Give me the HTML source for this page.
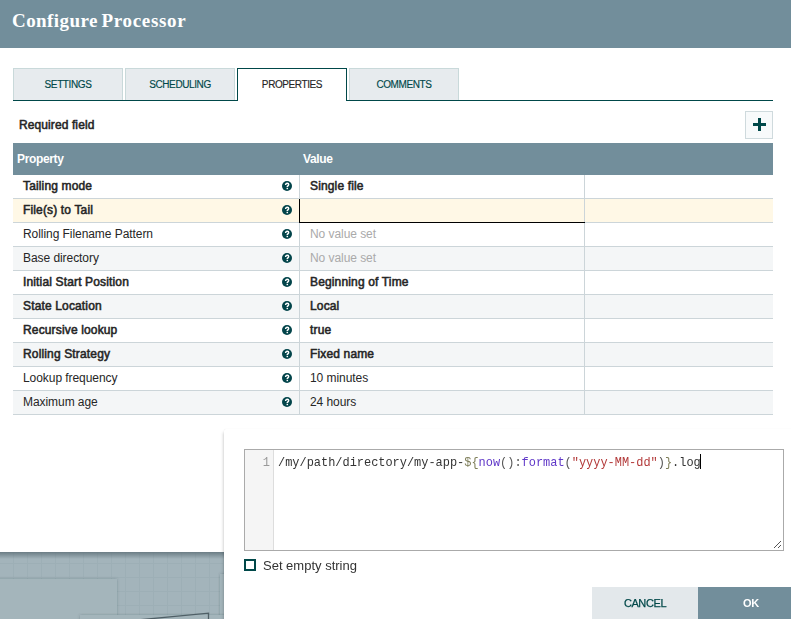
<!DOCTYPE html>
<html><head><meta charset="utf-8">
<style>
*{box-sizing:border-box;margin:0;padding:0}
html,body{width:791px;height:619px;overflow:hidden;background:#fff;font-family:"Liberation Sans",sans-serif;color:#262626;position:relative}
.abs{position:absolute}
#hdr{left:0;top:0;width:791px;height:48px;background:#728e9b}
#title{left:12px;top:10px;font-family:"Liberation Serif",serif;font-weight:bold;font-size:19px;letter-spacing:0.42px;word-spacing:-1.5px;color:#fff;white-space:nowrap}
.tab{top:68px;width:110px;height:32px;background:#e7ebee;border:1px solid #c9d9da;border-bottom:none;font-size:10px;letter-spacing:-0.4px;color:#004849;text-align:center;line-height:31px;-webkit-text-stroke:0.15px currentColor}
.tab.sel{background:#fff;color:#262626;border:1px solid #004849;border-bottom:none;height:33px;z-index:2}
#tabline{left:13px;top:100px;width:760px;height:1px;background:#004849}
#req{left:19px;top:118px;font-size:12px;-webkit-text-stroke:0.55px currentColor;letter-spacing:0.1px;white-space:nowrap}
#add{left:745px;top:111px;width:28px;height:28px;background:#f8fafb;border:1px solid #cfdadd}
#add:before{content:"";position:absolute;left:7px;top:11px;width:13px;height:3px;background:#004849}
#add:after{content:"";position:absolute;left:12px;top:6px;width:3px;height:13px;background:#004849}
#th{left:13px;top:143px;width:760px;height:32px;background:#728e9b;color:#fff;font-weight:bold;font-size:12px;letter-spacing:-0.35px}
#th span{position:absolute;top:9px}
.row{left:13px;width:760px;height:24px;border-bottom:1px solid #ccd5d9;font-size:12px;letter-spacing:-0.06px}
.row.alt{background:#f4f6f7}
.row.hl{background:#fff8e6}
.c1{position:absolute;left:10px;top:4px;white-space:nowrap}
.c2{position:absolute;left:297px;top:4px;white-space:nowrap}
.b{-webkit-text-stroke:0.55px currentColor;letter-spacing:0.15px}
.nv{color:#aaa}
.v1{position:absolute;left:286px;top:0;width:1px;height:23px;background:#ccd5d9}
.v2{position:absolute;left:571px;top:0;width:1px;height:23px;background:#ccd5d9}
.help{position:absolute;left:269px;top:6px;width:10px;height:10px}
#canvas{left:0;top:552px;width:224px;height:67px}
#popup{left:224px;top:429px;width:567px;height:190px;background:#fff;border-radius:2px 0 0 0;box-shadow:0 0 1px rgba(0,0,0,.1),-1px 3px 3px rgba(0,0,0,.16)}
#ed{will-change:transform;left:244px;top:449px;width:540px;height:102px;border:1px solid #aaa;background:#fff}
#gut{left:0;top:0;width:29px;height:100px;background:#f5f5f5;border-right:1px solid #ddd}
#ln{left:0;top:6px;width:25px;text-align:right;font-family:"Liberation Mono",monospace;font-size:12px;color:#999}
#code{left:33px;top:6px;font-family:"Liberation Mono",monospace;font-size:11.95px;color:#333;white-space:pre}
#chk{left:244px;top:559px;width:12px;height:12px;border:2px solid #004849}
#chkl{left:263px;top:558px;font-size:13px;color:#333;white-space:nowrap;will-change:transform}
#cancel{will-change:transform;left:592px;top:587px;width:106px;height:32px;background:#e3e8eb;color:#004849;font-size:11px;letter-spacing:-0.4px;-webkit-text-stroke:0.25px currentColor;text-align:center;line-height:32px}
#ok{will-change:transform;left:698px;top:587px;width:106px;height:32px;background:#728e9b;color:#fff;font-size:11px;font-weight:bold;letter-spacing:-0.3px;text-align:center;line-height:32px}
</style></head><body>
<div id="hdr" class="abs"></div>
<div id="title" class="abs">Configure <span style="letter-spacing:0.68px">Processor</span></div>

<div class="tab abs" style="left:13px">SETTINGS</div>
<div class="tab abs" style="left:125px">SCHEDULING</div>
<div class="tab abs sel" style="left:237px">PROPERTIES</div>
<div class="tab abs" style="left:349px">COMMENTS</div>
<div id="tabline" class="abs"></div>

<div id="req" class="abs">Required field</div>
<div id="add" class="abs"></div>

<div id="th" class="abs"><span style="left:4px">Property</span><span style="left:290px">Value</span></div>

<div class="row abs" style="top:175px"><span class="c1 b">Tailing mode</span><svg class="help" width="10" height="10" viewBox="0 0 10 10"><circle cx="5" cy="5" r="5" fill="#02444a"/><path d="M3.6 3.9C3.6 2.8 4.3 2.3 5.2 2.3C6.1 2.3 6.7 2.9 6.7 3.6C6.7 4.5 5.7 4.8 5.3 5.4L5.3 6.1" fill="none" stroke="#fff" stroke-width="1.45"/><rect x="4.55" y="6.8" width="1.5" height="1.4" fill="#fff"/></svg><span class="v1"></span><span class="c2 b">Single file</span><span class="v2"></span></div>
<div class="row abs hl" style="top:199px"><span class="c1 b">File(s) to Tail</span><span style="position:absolute;left:286px;top:0;width:1px;height:24px;background:#000;z-index:3"></span><span style="position:absolute;left:286px;top:23px;width:286px;height:1px;background:#000;z-index:3"></span><svg class="help" width="10" height="10" viewBox="0 0 10 10"><circle cx="5" cy="5" r="5" fill="#02444a"/><path d="M3.6 3.9C3.6 2.8 4.3 2.3 5.2 2.3C6.1 2.3 6.7 2.9 6.7 3.6C6.7 4.5 5.7 4.8 5.3 5.4L5.3 6.1" fill="none" stroke="#fff" stroke-width="1.45"/><rect x="4.55" y="6.8" width="1.5" height="1.4" fill="#fff"/></svg><span class="v1"></span><span class="v2"></span></div>
<div class="row abs" style="top:223px"><span class="c1">Rolling Filename Pattern</span><svg class="help" width="10" height="10" viewBox="0 0 10 10"><circle cx="5" cy="5" r="5" fill="#02444a"/><path d="M3.6 3.9C3.6 2.8 4.3 2.3 5.2 2.3C6.1 2.3 6.7 2.9 6.7 3.6C6.7 4.5 5.7 4.8 5.3 5.4L5.3 6.1" fill="none" stroke="#fff" stroke-width="1.45"/><rect x="4.55" y="6.8" width="1.5" height="1.4" fill="#fff"/></svg><span class="v1"></span><span class="c2 nv">No value set</span><span class="v2"></span></div>
<div class="row abs alt" style="top:247px"><span class="c1">Base directory</span><svg class="help" width="10" height="10" viewBox="0 0 10 10"><circle cx="5" cy="5" r="5" fill="#02444a"/><path d="M3.6 3.9C3.6 2.8 4.3 2.3 5.2 2.3C6.1 2.3 6.7 2.9 6.7 3.6C6.7 4.5 5.7 4.8 5.3 5.4L5.3 6.1" fill="none" stroke="#fff" stroke-width="1.45"/><rect x="4.55" y="6.8" width="1.5" height="1.4" fill="#fff"/></svg><span class="v1"></span><span class="c2 nv">No value set</span><span class="v2"></span></div>
<div class="row abs" style="top:271px"><span class="c1 b">Initial Start Position</span><svg class="help" width="10" height="10" viewBox="0 0 10 10"><circle cx="5" cy="5" r="5" fill="#02444a"/><path d="M3.6 3.9C3.6 2.8 4.3 2.3 5.2 2.3C6.1 2.3 6.7 2.9 6.7 3.6C6.7 4.5 5.7 4.8 5.3 5.4L5.3 6.1" fill="none" stroke="#fff" stroke-width="1.45"/><rect x="4.55" y="6.8" width="1.5" height="1.4" fill="#fff"/></svg><span class="v1"></span><span class="c2 b">Beginning of Time</span><span class="v2"></span></div>
<div class="row abs alt" style="top:295px"><span class="c1 b">State Location</span><svg class="help" width="10" height="10" viewBox="0 0 10 10"><circle cx="5" cy="5" r="5" fill="#02444a"/><path d="M3.6 3.9C3.6 2.8 4.3 2.3 5.2 2.3C6.1 2.3 6.7 2.9 6.7 3.6C6.7 4.5 5.7 4.8 5.3 5.4L5.3 6.1" fill="none" stroke="#fff" stroke-width="1.45"/><rect x="4.55" y="6.8" width="1.5" height="1.4" fill="#fff"/></svg><span class="v1"></span><span class="c2 b">Local</span><span class="v2"></span></div>
<div class="row abs" style="top:319px"><span class="c1 b">Recursive lookup</span><svg class="help" width="10" height="10" viewBox="0 0 10 10"><circle cx="5" cy="5" r="5" fill="#02444a"/><path d="M3.6 3.9C3.6 2.8 4.3 2.3 5.2 2.3C6.1 2.3 6.7 2.9 6.7 3.6C6.7 4.5 5.7 4.8 5.3 5.4L5.3 6.1" fill="none" stroke="#fff" stroke-width="1.45"/><rect x="4.55" y="6.8" width="1.5" height="1.4" fill="#fff"/></svg><span class="v1"></span><span class="c2 b">true</span><span class="v2"></span></div>
<div class="row abs alt" style="top:343px"><span class="c1 b">Rolling Strategy</span><svg class="help" width="10" height="10" viewBox="0 0 10 10"><circle cx="5" cy="5" r="5" fill="#02444a"/><path d="M3.6 3.9C3.6 2.8 4.3 2.3 5.2 2.3C6.1 2.3 6.7 2.9 6.7 3.6C6.7 4.5 5.7 4.8 5.3 5.4L5.3 6.1" fill="none" stroke="#fff" stroke-width="1.45"/><rect x="4.55" y="6.8" width="1.5" height="1.4" fill="#fff"/></svg><span class="v1"></span><span class="c2 b">Fixed name</span><span class="v2"></span></div>
<div class="row abs" style="top:367px"><span class="c1">Lookup frequency</span><svg class="help" width="10" height="10" viewBox="0 0 10 10"><circle cx="5" cy="5" r="5" fill="#02444a"/><path d="M3.6 3.9C3.6 2.8 4.3 2.3 5.2 2.3C6.1 2.3 6.7 2.9 6.7 3.6C6.7 4.5 5.7 4.8 5.3 5.4L5.3 6.1" fill="none" stroke="#fff" stroke-width="1.45"/><rect x="4.55" y="6.8" width="1.5" height="1.4" fill="#fff"/></svg><span class="v1"></span><span class="c2">10 minutes</span><span class="v2"></span></div>
<div class="row abs alt" style="top:391px"><span class="c1">Maximum age</span><svg class="help" width="10" height="10" viewBox="0 0 10 10"><circle cx="5" cy="5" r="5" fill="#02444a"/><path d="M3.6 3.9C3.6 2.8 4.3 2.3 5.2 2.3C6.1 2.3 6.7 2.9 6.7 3.6C6.7 4.5 5.7 4.8 5.3 5.4L5.3 6.1" fill="none" stroke="#fff" stroke-width="1.45"/><rect x="4.55" y="6.8" width="1.5" height="1.4" fill="#fff"/></svg><span class="v1"></span><span class="c2">24 hours</span><span class="v2"></span></div>

<svg id="canvas" class="abs" width="224" height="67" viewBox="0 0 224 67"><rect width="224" height="67" fill="#a3b4bb"/><g stroke="#9dafb6" stroke-width="1"><line x1="13.5" y1="0" x2="13.5" y2="67" /><line x1="27.5" y1="0" x2="27.5" y2="67" /><line x1="41.5" y1="0" x2="41.5" y2="67" /><line x1="55.5" y1="0" x2="55.5" y2="67" /><line x1="69.5" y1="0" x2="69.5" y2="67" /><line x1="83.5" y1="0" x2="83.5" y2="67" /><line x1="97.5" y1="0" x2="97.5" y2="67" /><line x1="111.5" y1="0" x2="111.5" y2="67" /><line x1="125.5" y1="0" x2="125.5" y2="67" /><line x1="139.5" y1="0" x2="139.5" y2="67" /><line x1="153.5" y1="0" x2="153.5" y2="67" /><line x1="167.5" y1="0" x2="167.5" y2="67" /><line x1="181.5" y1="0" x2="181.5" y2="67" /><line x1="195.5" y1="0" x2="195.5" y2="67" /><line x1="209.5" y1="0" x2="209.5" y2="67" /><line x1="223.5" y1="0" x2="223.5" y2="67" /><line x1="237.5" y1="0" x2="237.5" y2="67" /><line x1="0" y1="11.5" x2="224" y2="11.5" /><line x1="0" y1="25.5" x2="224" y2="25.5" /><line x1="0" y1="39.5" x2="224" y2="39.5" /><line x1="0" y1="53.5" x2="224" y2="53.5" /><line x1="0" y1="67.5" x2="224" y2="67.5" /></g><defs><filter id="ds" x="-20%" y="-20%" width="140%" height="140%"><feDropShadow dx="0" dy="0" stdDeviation="1.5" flood-color="#3c4e56" flood-opacity=".35"/></filter></defs><rect x="-5" y="27" width="122" height="45" fill="#a4b5bb" filter="url(#ds)"/><rect x="220" y="22" width="10" height="50" fill="#a4b5bb" filter="url(#ds)"/><rect x="80" y="63" width="150" height="10" fill="#a4b5bb" filter="url(#ds)"/><path d="M137 68 L208.5 61.2 L208.5 68" fill="none" stroke="#4f5f66" stroke-width="1.3"/><defs><linearGradient id="sh" x1="0" y1="0" x2="0" y2="1"><stop offset="0" stop-color="#5d6f77" stop-opacity=".8"/><stop offset="1" stop-color="#5d6f77" stop-opacity="0"/></linearGradient></defs><rect x="0" y="0" width="224" height="7" fill="url(#sh)"/></svg>
<div id="popup" class="abs"></div>
<div id="ed" class="abs"><div id="gut" class="abs"><div id="ln" class="abs">1</div></div><div id="code" class="abs">/my/path/directory/my-app-<span style="color:#7d7d58">${</span><span style="color:#6038c8">now</span><span style="color:#555">():</span><span style="color:#6038c8">format</span><span style="color:#555">(</span><span style="color:#b33a3a">"yyyy-MM-dd"</span><span style="color:#555">)</span><span style="color:#7d7d58">}</span>.log</div><div class="abs" style="left:455px;top:4px;width:1px;height:15px;background:#000"></div></div>
<svg class="abs" style="left:774px;top:541px;will-change:transform" width="7" height="7" viewBox="0 0 7 7" shape-rendering="crispEdges"><g fill="#555"><rect x="0" y="6" width="1" height="1"/><rect x="1" y="5" width="1" height="1"/><rect x="2" y="4" width="1" height="1"/><rect x="3" y="3" width="1" height="1"/><rect x="4" y="2" width="1" height="1"/><rect x="5" y="1" width="1" height="1"/><rect x="6" y="0" width="1" height="1"/><rect x="4" y="6" width="1" height="1"/><rect x="5" y="5" width="1" height="1"/><rect x="6" y="4" width="1" height="1"/></g></svg>
<div id="chk" class="abs"></div>
<div id="chkl" class="abs">Set empty string</div>
<div id="cancel" class="abs">CANCEL</div>
<div id="ok" class="abs">OK</div>
</body></html>
